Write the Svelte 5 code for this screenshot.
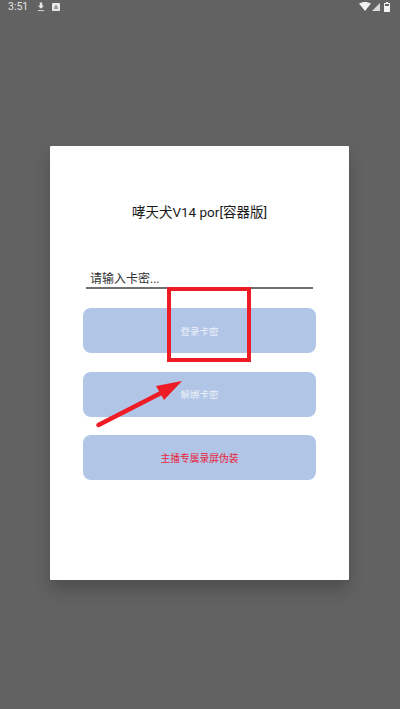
<script lang="ts">
  const buttons = [
    { label: "登录卡密", danger: false },
    { label: "解绑卡密", danger: false },
    { label: "主播专属录屏伪装", danger: true },
  ];
</script>

<div class="screen">
  <div class="status-bar">
    <div class="status-left">
      <span class="time">3:51</span>
      <svg width="8" height="10" viewBox="0 0 10 12" aria-hidden="true">
        <path d="M3.5 0.5h3v4h2.3L5 8.3 1.2 4.500h2.3z" fill="#e8e8e8" />
        <rect x="1.2" y="10" width="7.6" height="1.1" fill="#e8e8e8" />
      </svg>
      <svg width="8" height="8" viewBox="0 0 9 9" aria-hidden="true">
        <path fill-rule="evenodd" d="M1 0h7a1 1 0 0 1 1 1v7a1 1 0 0 1-1 1H1a1 1 0 0 1-1-1V1a1 1 0 0 1 1-1zM4.5 2 2.2 6.6h4.6zM4.5 3.8l1 2H3.5z" fill="#e8e8e8" />
      </svg>
    </div>
    <div class="status-right">
      <svg width="12" height="9" viewBox="0 0 12 9" aria-hidden="true">
        <path d="M0 1.6C3.5-.5 8.500-.5 12 1.600L6 9z" fill="#f2f2f2" />
      </svg>
      <svg width="8" height="8" viewBox="0 0 9 9" aria-hidden="true">
        <path d="M9 0v9H0z" fill="#d8d8d8" />
      </svg>
      <svg class="battery" width="6" height="10" viewBox="0 0 6 10" aria-hidden="true">
        <path fill-rule="evenodd" d="M2 0h2v1h1.500a.5.5 0 0 1 .5.500V9.500a.5.5 0 0 1-.5.500H.5a.5.5 0 0 1-.5-.5V1.500A.5.5 0 0 1 .5 1H2zM1 2v2h4V2z" fill="#f2f2f2" />
      </svg>
    </div>
  </div>

  <div class="dialog-wrap">
    <div class="dialog">
      <h1 class="title">哮天犬V14 por[容器版]</h1>
      <div class="field">请输入卡密...</div>
      <div class="actions">
        {#each buttons as b}
          <button class="action" class:danger={b.danger}>{b.label}</button>
        {/each}
      </div>

      <!-- annotation drawn over the screenshot -->
      <div class="mark-box"></div>
      <svg class="mark-arrow" width="92" height="50" viewBox="0 0 92 50" aria-hidden="true">
        <path d="M3.500 46 L66 14" stroke="#ee1c25" stroke-width="4.500" stroke-linecap="round" fill="none" />
        <path d="M87 2 L61 7 L65 14 L69 21z" fill="#ee1c25" />
      </svg>
    </div>
  </div>
</div>

<style>
  :global(body) {
    margin: 0;
    background: #626262;
  }

  .screen {
    width: 400px;
    height: 709px;
    background: #626262;
    display: flex;
    flex-direction: column;
    font-family: Roboto, "Noto Sans CJK SC", sans-serif;
    overflow: hidden;
  }

  .status-bar {
    height: 13px;
    padding: 0 8px;
    display: flex;
    align-items: center;
    justify-content: space-between;
  }

  .status-left,
  .status-right {
    display: flex;
    align-items: center;
  }

  .status-left {
    gap: 7px;
  }

  .status-right {
    gap: 1px;
    padding-right: 2px;
  }

  .battery {
    margin-left: 3px;
  }

  .time {
    font-size: 10.5px;
    color: #e4e4e4;
    margin-right: 2px;
  }

  .dialog-wrap {
    padding: 133px 51px 0 50px;
  }

  .dialog {
    position: relative;
    height: 434px;
    box-sizing: border-box;
    padding: 57px 33px 0;
    background: #fff;
    box-shadow: 0 10px 16px rgba(0, 0, 0, 0.2);
    border-radius: 1px;
  }

  .title {
    margin: 0;
    font-size: 13.500px;
    font-weight: 400;
    line-height: 18px;
    text-align: center;
    color: #1a1a1a;
  }

  .field {
    margin: 43px 3px 0;
    height: 25px;
    box-sizing: border-box;
    padding: 5px 4px 0;
    font-size: 12px;
    line-height: 20px;
    color: #303030;
    border-bottom: 2px solid #707070;
  }

  .actions {
    margin-top: 19px;
    display: flex;
    flex-direction: column;
    gap: 18.500px;
  }

  .action {
    height: 45px;
    border: none;
    border-radius: 8px;
    background: #b1c5e6;
    color: #eef2f9;
    font-family: inherit;
    font-size: 9.500px;
    padding: 0;
  }

  .action.danger {
    color: #e8243c;
    font-size: 9.750px;
  }

  .mark-box {
    position: absolute;
    left: 117px;
    top: 141px;
    width: 84px;
    height: 75px;
    box-sizing: border-box;
    border: 4px solid #ee1c25;
  }

  .mark-arrow {
    position: absolute;
    left: 45px;
    top: 233px;
  }
</style>
